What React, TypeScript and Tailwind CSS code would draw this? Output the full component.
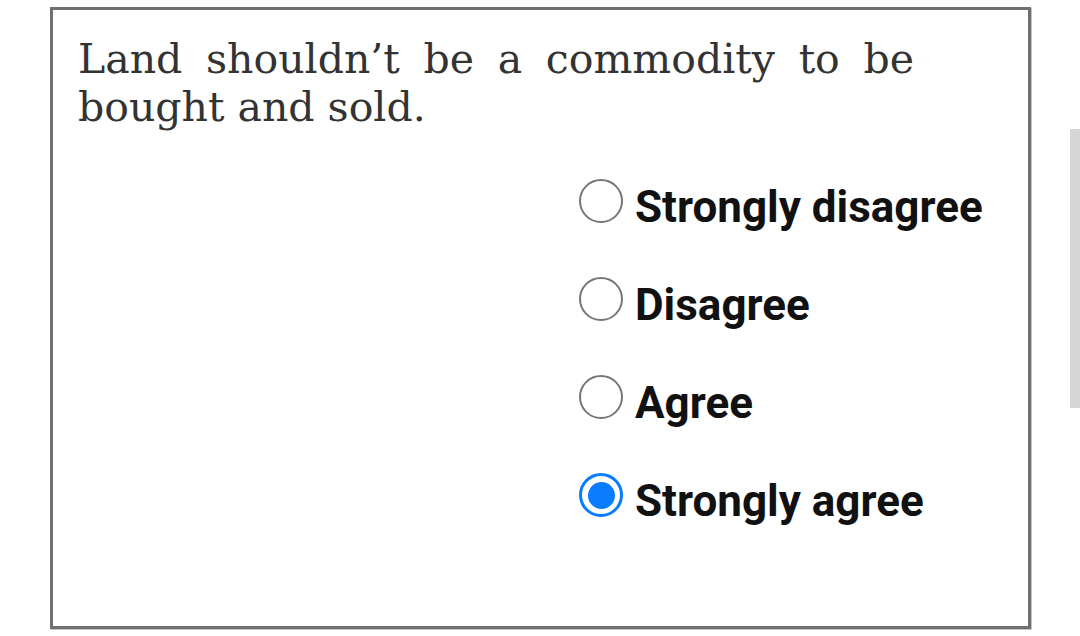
import React from "react";

const options = [
  { label: "Strongly disagree", checked: false },
  { label: "Disagree", checked: false },
  { label: "Agree", checked: false },
  { label: "Strongly agree", checked: true },
];

export default function App() {
  return (
    <div className="relative w-[1080px] h-[636px] bg-white overflow-hidden">
      <div className="ml-[50px] mt-[7px] w-[981px] h-[622px] border-[3px] border-[#6f6f6f] shadow-[1px_1px_0_#c4c4c4] box-border">
        <p
          className="ml-[25px] mt-[25px] w-[836px] text-justify text-[#333333] text-[41px] leading-[48px]"
          style={{ fontFamily: '"DejaVu Serif", serif' }}
        >
          Land shouldn’t be a commodity to be bought and sold.
        </p>
        <div className="ml-[526px] mt-[48px] flex flex-col gap-[54px]">
          {options.map((o) => (
            <label key={o.label} className="flex items-start gap-[12px] h-[44px]">
              {o.checked ? (
                <span className="shrink-0 w-[44px] h-[44px] rounded-full border-[3px] border-[#0a7cff] flex items-center justify-center box-border">
                  <span className="w-[27px] h-[27px] rounded-full bg-[#0a7cff]" />
                </span>
              ) : (
                <span className="shrink-0 w-[44px] h-[44px] rounded-full border-[2.5px] border-[#767676] box-border" />
              )}
              <span
                className="mt-[6px] text-[44px] font-bold text-[#111111] leading-[44px] whitespace-nowrap"
                style={{ fontFamily: "Roboto, sans-serif" }}
              >
                {o.label}
              </span>
            </label>
          ))}
        </div>
      </div>
      <div className="absolute left-[1070px] top-[129px] w-[10px] h-[279px] bg-[#d6d6d6]" />
    </div>
  );
}
